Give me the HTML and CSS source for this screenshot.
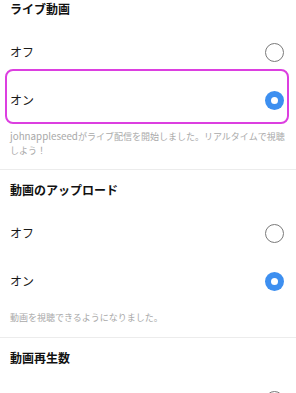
FILE: index.html
```html
<!DOCTYPE html>
<html lang="ja">
<head>
<meta charset="utf-8">
<link rel="stylesheet" href="styles.css">
</head>
<body>
<div class="section first">
  <div class="title">ライブ動画</div>
  <div class="row"><span class="label">オフ</span><span class="radio"></span></div>
  <div class="row highlighted"><span class="label">オン</span><span class="radio on"></span></div>
  <div class="desc"><span class="user">johnappleseed</span>がライブ配信を開始しました。リアルタイムで視聴しよう！</div>
</div>
<div class="section">
  <div class="title">動画のアップロード</div>
  <div class="row"><span class="label">オフ</span><span class="radio"></span></div>
  <div class="row"><span class="label">オン</span><span class="radio on"></span></div>
  <div class="desc">動画を視聴できるようになりました。</div>
</div>
<div class="section">
  <div class="title">動画再生数</div>
  <div class="row"><span class="label">オフ</span><span class="radio"></span></div>
</div>
</body>
</html>
```
FILE: styles.css
```css
html, body {
  margin: 0;
  padding: 0;
  background: #fff;
}
body {
  width: 296px;
  height: 393px;
  overflow: hidden;
  font-family: "Noto Sans CJK JP", "Noto Sans", sans-serif;
  color: #111;
}
.section {
  padding: 11px 0 12px;
  border-bottom: 1px solid #ececec;
}
.section.first {
  padding-top: 0;
}
.title {
  font-size: 12px;
  font-weight: 700;
  line-height: 18px;
  padding: 0 10px;
  margin-bottom: 10px;
}
.row {
  position: relative;
  height: 48px;
  display: flex;
  align-items: center;
  justify-content: space-between;
  padding: 0 12px 0 10px;
}
.row.highlighted::before {
  content: "";
  position: absolute;
  left: 5px;
  right: 7px;
  top: -7px;
  bottom: 0;
  border: 2px solid #dc3fe0;
  border-radius: 8px;
  pointer-events: none;
}
.label {
  font-size: 12px;
  line-height: 16px;
  color: #1a1a1a;
}
.radio {
  width: 19px;
  height: 19px;
  box-sizing: border-box;
  border: 1.3px solid #7a7a7a;
  border-radius: 50%;
  display: flex;
  align-items: center;
  justify-content: center;
}
.radio.on {
  border: none;
  background: #3d8ff0;
}
.radio.on::after {
  content: "";
  width: 7px;
  height: 7px;
  border-radius: 50%;
  background: #fff;
}
.desc {
  margin-top: 6px;
  padding: 0 8px 0 10px;
  font-size: 9px;
  line-height: 13.5px;
  color: #a9a9a9;
}
.user {
  font-size: 9.8px;
  line-height: 13.5px;
}
```
